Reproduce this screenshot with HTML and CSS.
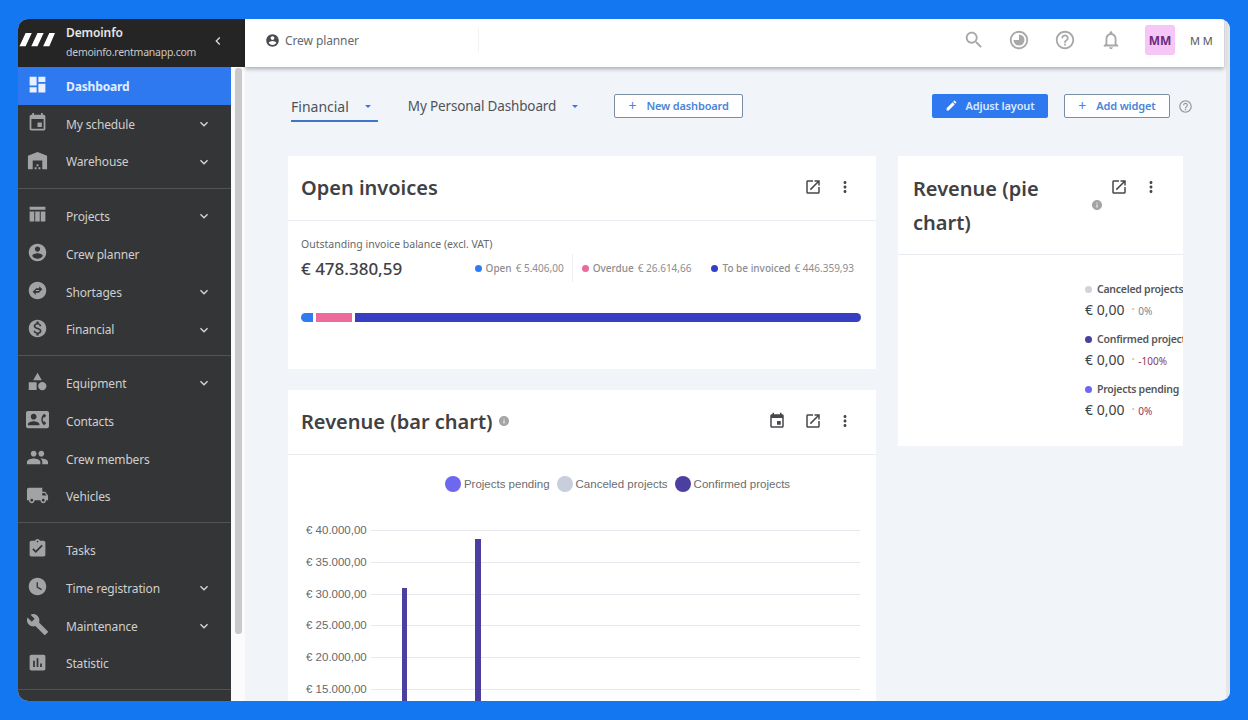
FILE: index.html
```html
<!DOCTYPE html>
<html lang="en">
<head>
  <meta charset="UTF-8">
  <meta name="viewport" content="width=device-width, initial-scale=1.0">
  <title>Dashboard</title>
  <link rel="stylesheet" href="styles.css">
</head>
<body>
  <svg class="defs" width="0" height="0">
    <symbol id="i-chev" viewBox="0 0 24 24"><path d="M7.41 8.59 12 13.17l4.59-4.58L18 10l-6 6-6-6z"/></symbol>
    <symbol id="i-open" viewBox="0 0 24 24"><path d="M19 19H5V5h7V3H5c-1.11 0-2 .9-2 2v14c0 1.1.89 2 2 2h14c1.1 0 2-.9 2-2v-7h-2v7zM14 3v2h3.59l-9.83 9.83 1.41 1.41L19 6.41V10h2V3h-7z"/></symbol>
    <symbol id="i-more" viewBox="0 0 24 24"><path d="M12 8c1.1 0 2-.9 2-2s-.9-2-2-2-2 .9-2 2 .9 2 2 2zm0 2c-1.1 0-2 .9-2 2s.9 2 2 2 2-.9 2-2-.9-2-2-2zm0 6c-1.1 0-2 .9-2 2s.9 2 2 2 2-.9 2-2-.9-2-2-2z"/></symbol>
    <symbol id="i-info" viewBox="0 0 24 24"><path d="M12 2C6.48 2 2 6.48 2 12s4.48 10 10 10 10-4.48 10-10S17.52 2 12 2zm1 15h-2v-6h2v6zm0-8h-2V7h2v2z"/></symbol>
    <symbol id="i-help" viewBox="0 0 24 24"><path d="M11 18h2v-2h-2v2zm1-16C6.48 2 2 6.48 2 12s4.48 10 10 10 10-4.48 10-10S17.52 2 12 2zm0 18c-4.41 0-8-3.59-8-8s3.59-8 8-8 8 3.59 8 8-3.59 8-8 8zm0-14c-2.21 0-4 1.79-4 4h2c0-1.1.9-2 2-2s2 .9 2 2c0 2-3 1.75-3 5h2c0-2.25 3-2.5 3-5 0-2.21-1.79-4-4-4z"/></symbol>
    <symbol id="i-event" viewBox="0 0 24 24"><path d="M17 12h-5v5h5v-5zM16 1v2H8V1H6v2H5c-1.11 0-1.99.9-1.99 2L3 19c0 1.1.89 2 2 2h14c1.1 0 2-.9 2-2V5c0-1.1-.9-2-2-2h-1V1h-2zm3 18H5V8h14v11z"/></symbol>
  </svg>

  <div class="app">
    <aside class="sidebar">
      <div class="brand">
        <svg class="logo" viewBox="0 0 38 16"><path d="M7 .5h6.500L7 14.500H.5zM19.500 .5H26L19.500 14.500H13zM32 .5h6L32 14.500h-6.500z"/></svg>
        <div class="brand-text">
          <strong>Demoinfo</strong>
          <span>demoinfo.rentmanapp.com</span>
        </div>
        <svg class="collapse" viewBox="0 0 24 24"><path d="M15.41 7.41 14 6l-6 6 6 6 1.410-1.410L10.830 12z"/></svg>
      </div>
      <div class="nav-wrap">
        <nav class="nav">
          <div class="nav-group first">
            <a class="nav-item active">
              <svg class="nav-icon" viewBox="0 0 24 24"><path d="M3 13h8V3H3v10zm0 8h8v-6H3v6zm10 0h8V11h-8v10zm0-18v6h8V3h-8z"/></svg>
              Dashboard
            </a>
            <a class="nav-item">
              <svg class="nav-icon"><use href="#i-event"/></svg>
              My schedule
              <svg class="nav-chev"><use href="#i-chev"/></svg>
            </a>
            <a class="nav-item">
              <svg class="nav-icon wide" viewBox="0 0 24 24"><path d="M22 21V7L12 3 2 7v14h5v-9h10v9h5zM11 19H9v2h2v-2zm2-3h-2v2h2v-2zm2 3h-2v2h2v-2z"/></svg>
              Warehouse
              <svg class="nav-chev"><use href="#i-chev"/></svg>
            </a>
          </div>
          <div class="nav-group">
            <a class="nav-item">
              <svg class="nav-icon" viewBox="0 0 24 24"><path d="M3 3h18v3.500H3zM3 8.500h5.300V20H4a1 1 0 0 1-1-1zM9.400 8.500h5.200V20H9.400zM15.700 8.500H21V19a1 1 0 0 1-1 1h-4.300z"/></svg>
              Projects
              <svg class="nav-chev"><use href="#i-chev"/></svg>
            </a>
            <a class="nav-item">
              <svg class="nav-icon" viewBox="0 0 24 24"><path d="M12 2C6.480 2 2 6.480 2 12s4.480 10 10 10 10-4.480 10-10S17.520 2 12 2zm0 3c1.660 0 3 1.340 3 3s-1.340 3-3 3-3-1.340-3-3 1.340-3 3-3zm0 14.200c-2.500 0-4.710-1.280-6-3.220.03-1.990 4-3.080 6-3.080 1.990 0 5.970 1.090 6 3.080-1.290 1.940-3.500 3.220-6 3.220z"/></svg>
              Crew planner
            </a>
            <a class="nav-item">
              <svg class="nav-icon" viewBox="0 0 24 24"><path d="M12 2C6.480 2 2 6.480 2 12s4.480 10 10 10 10-4.480 10-10S17.520 2 12 2zm2 5 3.500 3.500L14 14v-2.500h-4v-2h4V7zm-4 10-3.500-3.500L10 10v2.500h4v2h-4V17z"/></svg>
              Shortages
              <svg class="nav-chev"><use href="#i-chev"/></svg>
            </a>
            <a class="nav-item">
              <svg class="nav-icon" viewBox="0 0 24 24"><path d="M12 2C6.480 2 2 6.480 2 12s4.480 10 10 10 10-4.480 10-10S17.520 2 12 2zm1.410 16.090V20h-2.670v-1.930c-1.710-.36-3.160-1.460-3.270-3.400h1.960c.1 1.050.82 1.870 2.650 1.870 1.960 0 2.400-.98 2.400-1.590 0-.83-.44-1.610-2.670-2.140-2.480-.6-4.180-1.620-4.180-3.670 0-1.720 1.390-2.840 3.110-3.210V4h2.670v1.950c1.860.45 2.790 1.860 2.850 3.390H14.300c-.05-1.110-.64-1.870-2.220-1.870-1.500 0-2.400.68-2.400 1.640 0 .84.65 1.390 2.670 1.910s4.180 1.390 4.180 3.910c-.01 1.830-1.380 2.830-3.120 3.160z"/></svg>
              Financial
              <svg class="nav-chev"><use href="#i-chev"/></svg>
            </a>
          </div>
          <div class="nav-group">
            <a class="nav-item">
              <svg class="nav-icon" viewBox="0 0 24 24"><path d="M12 2l-5 8.500h10zM17.500 12.500a4.750 4.750 0 1 0 0 9.500 4.750 4.750 0 0 0 0-9.500zM2 12.800h9v9H2z"/></svg>
              Equipment
              <svg class="nav-chev"><use href="#i-chev"/></svg>
            </a>
            <a class="nav-item">
              <svg class="nav-icon wide" viewBox="0 0 24 24"><path d="M22 3H2C.9 3 0 3.900 0 5v14c0 1.100.9 2 2 2h20c1.100 0 1.990-.9 1.990-2L24 5c0-1.100-.9-2-2-2zM8 6c1.660 0 3 1.340 3 3s-1.340 3-3 3-3-1.340-3-3 1.340-3 3-3zm6 12H2v-1c0-2 4-3.100 6-3.100s6 1.100 6 3.100v1zm3.850-4h1.640L21 16l-1.990 1.990c-1.310-.98-2.280-2.380-2.730-3.990-.18-.64-.28-1.310-.28-2s.1-1.360.28-2c.45-1.620 1.420-3.010 2.730-3.990L21 8l-1.510 2h-1.640c-.22.63-.35 1.300-.35 2s.13 1.370.35 2z"/></svg>
              Contacts
            </a>
            <a class="nav-item">
              <svg class="nav-icon wide" viewBox="0 0 24 24"><path d="M16 11c1.660 0 2.990-1.340 2.990-3S17.660 5 16 5c-1.660 0-3 1.340-3 3s1.340 3 3 3zm-8 0c1.660 0 2.990-1.340 2.990-3S9.660 5 8 5C6.340 5 5 6.340 5 8s1.340 3 3 3zm0 2c-2.330 0-7 1.170-7 3.500V19h14v-2.500c0-2.330-4.670-3.500-7-3.500zm8 0c-.29 0-.62.02-.97.05 1.160.84 1.970 1.970 1.970 3.450V19h6v-2.500c0-2.330-4.670-3.500-7-3.500z"/></svg>
              Crew members
            </a>
            <a class="nav-item">
              <svg class="nav-icon wide" viewBox="0 0 24 24"><path d="M20 8h-3V4H3c-1.100 0-2 .9-2 2v11h2c0 1.660 1.340 3 3 3s3-1.340 3-3h6c0 1.660 1.340 3 3 3s3-1.340 3-3h2v-5l-3-4zM6 18.500c-.83 0-1.500-.67-1.500-1.500s.67-1.500 1.500-1.500 1.500.67 1.500 1.500-.67 1.500-1.500 1.500zm13.500-9 1.960 2.500H17V9.500h2.500zm-1.500 9c-.83 0-1.500-.67-1.500-1.500s.67-1.500 1.500-1.500 1.500.67 1.500 1.500-.67 1.500-1.500 1.500z"/></svg>
              Vehicles
            </a>
          </div>
          <div class="nav-group">
            <a class="nav-item">
              <svg class="nav-icon" viewBox="0 0 24 24"><path d="M19 3h-4.180C14.400 1.840 13.300 1 12 1c-1.300 0-2.400.84-2.820 2H5c-1.100 0-2 .9-2 2v14c0 1.100.9 2 2 2h14c1.100 0 2-.9 2-2V5c0-1.100-.9-2-2-2zm-7 0c.55 0 1 .45 1 1s-.45 1-1 1-1-.45-1-1 .45-1 1-1zm-2 14-4-4 1.410-1.410L10 14.170l6.590-6.590L18 9l-8 8z"/></svg>
              Tasks
            </a>
            <a class="nav-item">
              <svg class="nav-icon" viewBox="0 0 24 24"><path d="M12 2C6.500 2 2 6.500 2 12s4.500 10 10 10 10-4.500 10-10S17.500 2 12 2zm4.200 14.200L11 13V7h1.500v5.200l4.500 2.700-.8 1.300z"/></svg>
              Time registration
              <svg class="nav-chev"><use href="#i-chev"/></svg>
            </a>
            <a class="nav-item">
              <svg class="nav-icon wide" viewBox="0 0 24 24"><path d="M22.700 19l-9.100-9.100c.9-2.300.4-5-1.500-6.900-2-2-5-2.400-7.400-1.300L9 6 6 9 1.600 4.700C.4 7.100.9 10.100 2.900 12.100c1.900 1.900 4.600 2.400 6.900 1.500l9.100 9.100c.4.4 1 .4 1.400 0l2.300-2.300c.5-.4.5-1.100.1-1.400z"/></svg>
              Maintenance
              <svg class="nav-chev"><use href="#i-chev"/></svg>
            </a>
            <a class="nav-item">
              <svg class="nav-icon" viewBox="0 0 24 24"><path d="M19 3H5c-1.100 0-2 .9-2 2v14c0 1.100.9 2 2 2h14c1.100 0 2-.9 2-2V5c0-1.100-.9-2-2-2zM9 17H7v-7h2v7zm4 0h-2V7h2v10zm4 0h-2v-4h2v4z"/></svg>
              Statistic
            </a>
          </div>
          <div class="nav-group"></div>
        </nav>
        <div class="side-scroll"><div class="side-thumb"></div></div>
      </div>
    </aside>

    <div class="content">
      <header class="topbar">
        <div class="crumb">
          <svg viewBox="0 0 24 24"><path d="M12 2C6.480 2 2 6.480 2 12s4.480 10 10 10 10-4.480 10-10S17.520 2 12 2zm0 3c1.660 0 3 1.340 3 3s-1.340 3-3 3-3-1.340-3-3 1.340-3 3-3zm0 14.200c-2.500 0-4.710-1.280-6-3.220.03-1.990 4-3.080 6-3.080 1.990 0 5.970 1.090 6 3.080-1.290 1.940-3.500 3.220-6 3.220z"/></svg>
          Crew planner
        </div>
        <div class="top-actions">
          <svg class="top-icon" viewBox="0 0 24 24"><path d="M15.500 14h-.79l-.28-.27C15.410 12.590 16 11.110 16 9.500 16 5.910 13.090 3 9.500 3S3 5.910 3 9.500 5.910 16 9.500 16c1.610 0 3.090-.59 4.230-1.570l.27.28v.79l5 4.990L20.490 19l-4.990-5zm-6 0C7.010 14 5 11.990 5 9.500S7.010 5 9.500 5 14 7.010 14 9.500 11.990 14 9.500 14z"/></svg>
          <svg class="top-icon" viewBox="0 0 24 24"><path d="M12 2C6.480 2 2 6.480 2 12s4.480 10 10 10 10-4.480 10-10S17.520 2 12 2zm0 18c-4.410 0-8-3.590-8-8s3.590-8 8-8 8 3.590 8 8-3.590 8-8 8z"/><path d="M12 6a6 6 0 1 1-6 6h6z"/></svg>
          <svg class="top-icon"><use href="#i-help"/></svg>
          <svg class="top-icon" viewBox="0 0 24 24"><path d="M12 22c1.100 0 2-.9 2-2h-4c0 1.100.9 2 2 2zm6-6v-5c0-3.070-1.630-5.640-4.500-6.320V4c0-.83-.67-1.500-1.500-1.500s-1.500.67-1.500 1.500v.68C7.640 5.360 6 7.920 6 11v5l-2 2v1h16v-1l-2-2zm-2 1H8v-6c0-2.480 1.510-4.500 4-4.500s4 2.020 4 4.500v6z"/></svg>
          <div class="avatar">MM</div>
          <span class="user-name">M M</span>
        </div>
      </header>

      <main class="main">
        <div class="toolbar">
          <div class="tab active">Financial <i class="caret"></i></div>
          <div class="tab">My Personal Dashboard <i class="caret"></i></div>
          <button class="btn btn-outline new-dash"><span class="plus">+</span> New dashboard</button>
          <div class="spacer"></div>
          <button class="btn btn-primary">
            <svg viewBox="0 0 24 24"><path d="M3 17.250V21h3.750L17.810 9.940l-3.750-3.750L3 17.250zM20.710 7.040c.39-.39.39-1.020 0-1.410l-2.340-2.340c-.39-.39-1.020-.39-1.410 0l-1.830 1.830 3.750 3.750 1.830-1.830z"/></svg>
            Adjust layout
          </button>
          <button class="btn btn-outline"><span class="plus">+</span> Add widget</button>
          <svg class="toolbar-help"><use href="#i-help"/></svg>
        </div>

        <div class="widgets">
          <div class="col-left">
            <section class="card">
              <div class="card-head">
                <h2>Open invoices</h2>
                <div class="card-tools">
                  <svg><use href="#i-open"/></svg>
                  <svg><use href="#i-more"/></svg>
                </div>
              </div>
              <div class="invoice-body">
                <div class="invoice-label">Outstanding invoice balance (excl. VAT)</div>
                <div class="invoice-row">
                  <div class="invoice-total">€ 478.380,59</div>
                  <div class="invoice-legend">
                    <span class="leg leg-open"><i class="dot blue"></i><b>Open</b> € 5.406,00</span>
                    <span class="leg leg-overdue"><i class="dot pink"></i><b>Overdue</b> € 26.614,66</span>
                    <span class="leg leg-todo"><i class="dot navy"></i><b>To be invoiced</b> € 446.359,93</span>
                  </div>
                </div>
                <div class="stack-bar">
                  <div class="seg blue" style="width:12px"></div>
                  <div class="seg pink" style="width:36px"></div>
                  <div class="seg navy" style="flex:1"></div>
                </div>
              </div>
            </section>

            <section class="card">
              <div class="card-head">
                <h2>Revenue (bar chart)</h2>
                <svg class="info"><use href="#i-info"/></svg>
                <div class="card-tools three">
                  <svg><use href="#i-event"/></svg>
                  <svg><use href="#i-open"/></svg>
                  <svg><use href="#i-more"/></svg>
                </div>
              </div>
              <div class="chart">
                <div class="chart-legend">
                  <span><i class="ldot pending"></i>Projects pending</span>
                  <span><i class="ldot canceled"></i>Canceled projects</span>
                  <span><i class="ldot confirmed"></i>Confirmed projects</span>
                </div>
                <div class="plot">
                  <div class="grid-row"><span>€ 40.000,00</span><i></i></div>
                  <div class="grid-row"><span>€ 35.000,00</span><i></i></div>
                  <div class="grid-row"><span>€ 30.000,00</span><i></i></div>
                  <div class="grid-row"><span>€ 25.000,00</span><i></i></div>
                  <div class="grid-row"><span>€ 20.000,00</span><i></i></div>
                  <div class="grid-row"><span>€ 15.000,00</span><i></i></div>
                  <div class="bar bar-one"></div>
                  <div class="bar bar-two"></div>
                </div>
              </div>
            </section>
          </div>

          <section class="card card-pie">
            <div class="card-head pie-head">
              <h2>Revenue (pie chart)</h2>
              <svg class="info"><use href="#i-info"/></svg>
              <div class="card-tools">
                <svg><use href="#i-open"/></svg>
                <svg><use href="#i-more"/></svg>
              </div>
            </div>
            <div class="pie-body">
              <div class="pie-stat">
                <div class="pie-name"><i class="dot grey"></i>Canceled projects</div>
                <div class="pie-value">€ 0,00 <small>˄</small><em class="flat">0%</em></div>
              </div>
              <div class="pie-stat">
                <div class="pie-name"><i class="dot indigo"></i>Confirmed projects</div>
                <div class="pie-value">€ 0,00 <small>˄</small><em>-100%</em></div>
              </div>
              <div class="pie-stat">
                <div class="pie-name"><i class="dot violet"></i>Projects pending</div>
                <div class="pie-value">€ 0,00 <small>˄</small><em>0%</em></div>
              </div>
            </div>
          </section>
        </div>
      </main>
    </div>
  </div>
</body>
</html>
```

FILE: styles.css
```css
* {
  box-sizing: border-box;
  margin: 0;
  padding: 0;
}

html, body {
  height: 100%;
  overflow: hidden;
}

body {
  background-color: #1277f1;
  padding: 19px 18px;
  font-family: "Noto Sans", sans-serif;
  color: #3c3e41;
}

.defs {
  position: absolute;
}

.app {
  display: flex;
  height: 682px;
  border-radius: 10px;
  overflow: hidden;
  background-color: #f1f5fa;
}

/* Sidebar */
.sidebar {
  width: 227px;
  flex-shrink: 0;
  display: flex;
  flex-direction: column;
}

.brand {
  height: 48px;
  width: 227px;
  flex-shrink: 0;
  display: flex;
  align-items: center;
  background-color: #252525;
  padding: 0 0 0 1px;
  color: #e6e6e6;
}

.logo {
  width: 36px;
  height: 16px;
  fill: #fff;
  margin: -6px 11px 0 0;
}

.brand-text {
  flex: 1;
  display: flex;
  flex-direction: column;
  gap: 3px;
  margin-top: -2px;
}

.brand-text strong {
  font-size: 12px;
  font-weight: 600;
  line-height: 16px;
  letter-spacing: -0.1px;
}

.brand-text span {
  font-size: 10.500px;
  line-height: 16px;
  letter-spacing: -0.25px;
  color: #c9c9c9;
}

.collapse {
  width: 16px;
  height: 16px;
  fill: #ddd;
  margin-right: 19px;
  margin-top: -5px;
}

.nav-wrap {
  flex: 1;
  display: flex;
  min-height: 0;
}

.nav {
  width: 213px;
  background-color: #343537;
  overflow: hidden;
}

.nav-group {
  padding: 8px 0 7px;
  border-top: 1px solid #525355;
}

.nav-group.first {
  padding: 0 0 8px;
  border-top: 0;
}

.nav-item {
  height: 37.750px;
  display: flex;
  align-items: center;
  font-size: 12px;
  letter-spacing: -0.15px;
  color: #cfcfcf;
  padding: 1px 0 0 48px;
  position: relative;
}

.nav-item.active {
  background-color: #2f79f0;
  color: #e2eeff;
  font-weight: 700;
}

.nav-icon {
  position: absolute;
  left: 9px;
  top: 7px;
  width: 21px;
  height: 21px;
  fill: #a2a3a4;
}

.nav-icon.wide {
  left: 8px;
  width: 23px;
  height: 23px;
  top: 6px;
}

.nav-item.active .nav-icon {
  fill: #e8f1ff;
}

.nav-chev {
  position: absolute;
  right: 19px;
  top: 11px;
  width: 16px;
  height: 16px;
  fill: #d6d6d6;
}

.side-scroll {
  width: 14px;
  background-color: #fbfbfb;
  padding: 1px 3px 0 4px;
}

.side-thumb {
  height: 566px;
  background-color: #c9c9cb;
  border-radius: 3px;
}

/* Right side */
.content {
  flex: 1;
  min-width: 0;
  display: flex;
  flex-direction: column;
  border-right: 4px solid #e4e6e9;
}

.topbar {
  height: 48px;
  flex-shrink: 0;
  background-color: #fff;
  display: flex;
  align-items: center;
  justify-content: space-between;
  margin-right: 2px;
  padding: 0 0 6px 20px;
  box-shadow: 0 2px 4px rgba(0, 0, 0, 0.3);
  position: relative;
}

.crumb {
  width: 214px;
  height: 26px;
  display: flex;
  align-items: center;
  gap: 5px;
  font-size: 12px;
  letter-spacing: -0.1px;
  color: #66686b;
  border-right: 1px solid #f3f3f3;
}

.crumb svg {
  width: 15px;
  height: 15px;
  fill: #4a4c50;
}

.top-actions {
  display: flex;
  align-items: center;
}

.top-icon {
  width: 22px;
  height: 22px;
  fill: #a8a8a8;
  margin-right: 24px;
}

.top-icon:first-child {
  margin-right: 23px;
}

.avatar {
  width: 30px;
  height: 30px;
  border-radius: 3px;
  background-color: #f6c6f6;
  color: #6b2a7d;
  font-size: 12px;
  font-weight: 700;
  display: flex;
  align-items: center;
  justify-content: center;
  margin-left: -1px;
}

.user-name {
  font-size: 11px;
  color: #55575a;
  width: 49px;
  padding-left: 15px;
}

.main {
  flex: 1;
  min-height: 0;
  overflow: hidden;
  padding: 22px 43px 0 43px;
}

.toolbar {
  display: flex;
  align-items: center;
  height: 34px;
  margin: 0 -10px 33px 3px;
}

.tab {
  height: 32px;
  font-size: 13.500px;
  letter-spacing: -0.15px;
  color: #505256;
  display: flex;
  align-items: center;
  margin-right: 30px;
  padding-right: 6px;
}

.tab.active {
  font-size: 14px;
  letter-spacing: 0;
  border-bottom: 2px solid #3d78c8;
  padding: 2px 7px 0 0;
}

.caret {
  display: inline-block;
  margin-left: 16px;
  border-left: 3px solid transparent;
  border-right: 3px solid transparent;
  border-top: 3px solid #2f79f0;
}

.btn {
  height: 24px;
  display: inline-flex;
  align-items: center;
  justify-content: center;
  font-family: inherit;
  font-size: 11px;
  font-weight: 600;
  letter-spacing: -0.15px;
  padding-bottom: 2px;
  border-radius: 2px;
  cursor: pointer;
}

.btn-outline {
  background-color: #fff;
  border: 1px solid #7c8ea3;
  color: #4a84d8;
  width: 106px;
  gap: 10px;
}

.new-dash {
  width: 129px;
}

.plus {
  font-size: 14px;
  font-weight: 400;
}

.btn-primary {
  background-color: #2f79f0;
  border: 0;
  color: #dbe8fc;
  width: 116px;
  margin-right: 16px;
  gap: 7px;
}

.btn-primary svg {
  width: 13px;
  height: 13px;
  fill: #fff;
}

.spacer {
  flex: 1;
}

.toolbar-help {
  width: 15px;
  height: 15px;
  fill: #9a9a9a;
  margin-left: 8px;
}

.widgets {
  display: flex;
  gap: 22px;
  align-items: flex-start;
}

.col-left {
  width: 588px;
  display: flex;
  flex-direction: column;
  gap: 21px;
}

.card {
  background-color: #fff;
}

.card-pie {
  width: 285px;
}

.card-head {
  height: 65px;
  display: flex;
  align-items: center;
  padding: 0 13px 2px;
  border-bottom: 1px solid #e8ebf0;
  gap: 5px;
}

.card-head h2 {
  font-size: 20px;
  font-weight: 600;
  color: #3f4144;
}

.info {
  width: 12px;
  height: 12px;
  fill: #a4a4a4;
}

.card-tools {
  margin-left: auto;
  display: flex;
  gap: 14px;
  margin-right: 9px;
}

.card-tools svg {
  width: 18px;
  height: 18px;
  fill: #46484b;
}

.card-tools.three svg:first-child {
  margin-right: 4px;
}

.invoice-body {
  height: 148px;
  padding: 16px 15px 0 13px;
}

.invoice-label {
  font-size: 10.500px;
  line-height: 14px;
  color: #66686b;
}

.invoice-row {
  display: flex;
  align-items: center;
  margin-top: 3px;
  height: 28px;
}

.invoice-total {
  font-size: 17px;
  font-weight: 500;
  color: #3f4144;
}

.invoice-legend {
  margin-left: auto;
  margin-right: 7px;
  display: flex;
  align-items: center;
  font-size: 10px;
  color: #8c8e91;
}

.leg {
  display: flex;
  align-items: center;
  gap: 4px;
}

.leg b {
  font-weight: 500;
}

.leg-open {
  height: 28px;
  padding-right: 8px;
  border-right: 1px solid #eceef1;
}

.leg-overdue {
  margin-left: 9px;
}

.leg-todo {
  margin-left: 20px;
}

.dot {
  display: inline-block;
  flex-shrink: 0;
  width: 7px;
  height: 7px;
  border-radius: 50%;
}

.blue {
  background-color: #2f7cf0;
}

.pink {
  background-color: #ec6a9c;
}

.navy {
  background-color: #363fc2;
}

.grey {
  background-color: #d2d3d6;
}

.indigo {
  background-color: #4b3fa0;
}

.violet {
  background-color: #6e68f0;
}

.stack-bar {
  display: flex;
  gap: 3px;
  height: 9px;
  margin-top: 31px;
}

.seg:first-child {
  border-radius: 5px 0 0 5px;
}

.seg:last-child {
  border-radius: 0 5px 5px 0;
}

.chart {
  height: 300px;
  padding-top: 21px;
}

.chart-legend {
  display: flex;
  justify-content: center;
  gap: 7px;
  font-family: "Liberation Sans", sans-serif;
  font-size: 11.500px;
  color: #6b6d70;
  padding-left: 71px;
}

.chart-legend span {
  display: flex;
  align-items: center;
  gap: 3px;
}

.ldot {
  width: 16px;
  height: 16px;
  border-radius: 50%;
}

.pending {
  background-color: #6e68f0;
}

.canceled {
  background-color: #c9cedd;
}

.confirmed {
  background-color: #4b3fa0;
}

.plot {
  position: relative;
  margin-top: 38px;
  padding: 0 16px 0 18px;
}

.grid-row {
  height: 31.800px;
  display: flex;
  align-items: flex-start;
  font-family: "Liberation Sans", sans-serif;
  font-size: 11.500px;
  color: #66686b;
  gap: 5px;
}

.grid-row span {
  width: 60px;
  line-height: 14px;
  margin-top: -7px;
  white-space: nowrap;
}

.grid-row i {
  flex: 1;
  height: 1px;
  background-color: #e6e8ed;
}

.bar {
  position: absolute;
  width: 5.500px;
  bottom: 0;
  background-color: #4b3fa0;
}

.bar-one {
  left: 113.500px;
  top: 57.700px;
}

.bar-two {
  left: 187px;
  top: 9.300px;
}

.pie-head {
  height: 99px;
  padding: 0 13px 0 15px;
  align-items: flex-start;
  position: relative;
}

.pie-head h2 {
  width: 173px;
  line-height: 34px;
  margin-top: 16px;
}

.pie-head .info {
  margin-top: 43px;
}

.pie-head .card-tools {
  margin-top: 22px;
  margin-right: 10px;
}

.pie-body {
  height: 191px;
  padding: 26px 0 0 187px;
  overflow: hidden;
}

.pie-stat {
  height: 50px;
}

.pie-name {
  display: flex;
  align-items: center;
  gap: 5px;
  font-size: 10.500px;
  font-weight: 600;
  letter-spacing: -0.25px;
  color: #55575a;
  white-space: nowrap;
  line-height: 16px;
}

.pie-value {
  font-size: 14px;
  color: #3f4144;
  margin-top: 3px;
  white-space: nowrap;
}

.pie-value small {
  font-size: 8px;
  margin-left: 4px;
  color: #55575a;
}

.pie-value em {
  font-style: normal;
  font-size: 10px;
  color: #8a3a5c;
  margin-left: 4px;
}

.pie-value em.flat {
  color: #6f8a94;
}
```
